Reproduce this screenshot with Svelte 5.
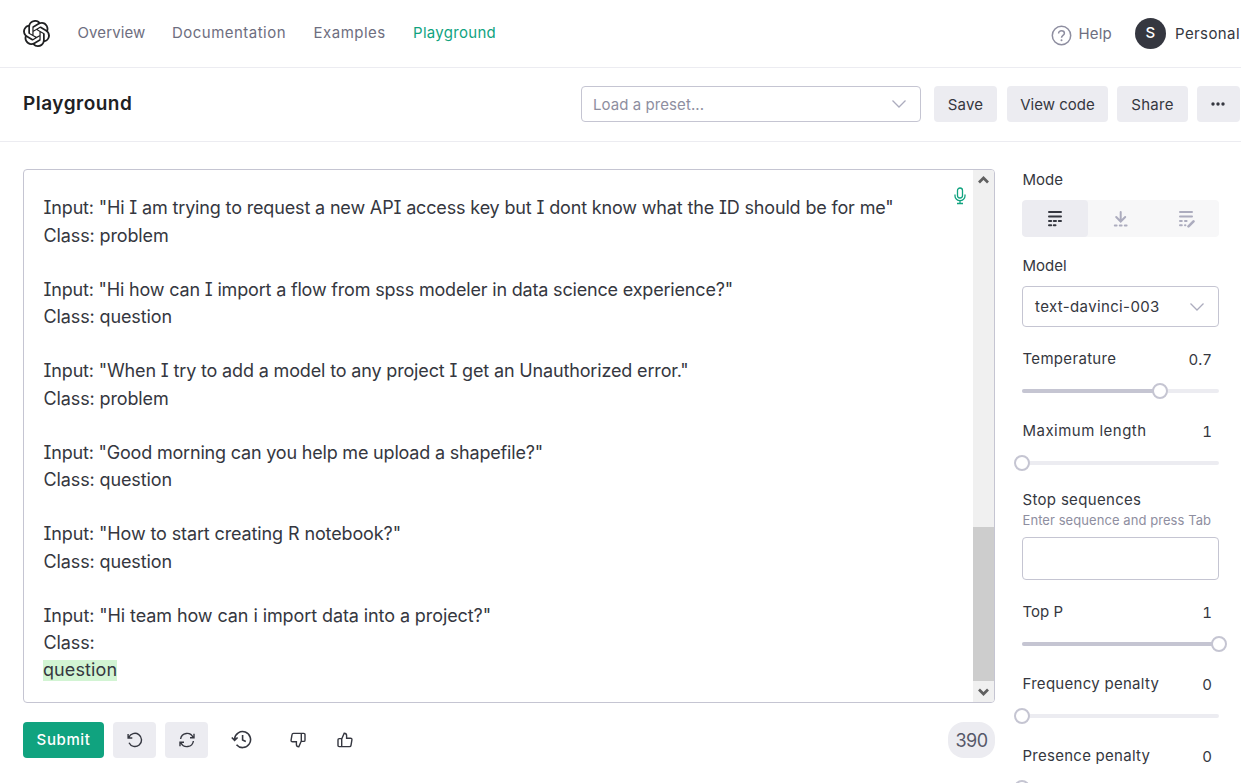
<script>
  const nav = [
    { label: 'Overview', width: 67, tracking: 0.1 },
    { label: 'Documentation', width: 114, tracking: 0.48 },
    { label: 'Examples', width: 72, tracking: 0.5 },
    { label: 'Playground', width: 83, tracking: 0.3, active: true }
  ];
  const examples = [
    { input: 'Input: "Hi I am trying to request a new API access key but I dont know what the ID should be for me"', label: 'Class: problem', tracking: -0.155 },
    { input: 'Input: "Hi how can I import a flow from spss modeler in data science experience?"', label: 'Class: question', tracking: -0.18 },
    { input: 'Input: "When I try to add a model to any project I get an Unauthorized error."', label: 'Class: problem', tracking: -0.155 },
    { input: 'Input: "Good morning can you help me upload a shapefile?"', label: 'Class: question', tracking: -0.19 },
    { input: 'Input: "How to start creating R notebook?"', label: 'Class: question', tracking: -0.12 },
    { input: 'Input: "Hi team how can i import data into a project?"', label: 'Class:', tracking: -0.09 }
  ];
</script>

{#snippet chevron()}
  <svg class="chevron" width="16" height="10" viewBox="0 0 16 10"><path d="M1.500 1.500 8 8l6.500-6.500" /></svg>
{/snippet}

{#snippet slider(label, value, percent, tracking)}
  <div class="slider">
    <div class="row"><span style="letter-spacing: {tracking}px">{label}</span><span class="value">{value}</span></div>
    <div class="track">
      <div class="fill" style="width: {percent}%"></div>
      <div class="thumb" style="left: {percent}%"></div>
    </div>
  </div>
{/snippet}

<div class="page">
  <header>
    <svg class="logo" viewBox="0 0 24 24"><path d="M22.2819 9.8211a5.9847 5.9847 0 0 0-.5157-4.9108 6.0462 6.0462 0 0 0-6.5098-2.9A6.0651 6.0651 0 0 0 4.9807 4.1818a5.9847 5.9847 0 0 0-3.9977 2.9 6.0462 6.0462 0 0 0 .7427 7.0966 5.98 5.98 0 0 0 .511 4.9107 6.051 6.051 0 0 0 6.5146 2.9001A5.9847 5.9847 0 0 0 13.2599 24a6.0557 6.0557 0 0 0 5.7718-4.2058 5.9894 5.9894 0 0 0 3.9977-2.9001 6.0557 6.0557 0 0 0-.7475-7.0729zm-9.022 12.6081a4.4755 4.4755 0 0 1-2.8764-1.0408l.1419-.0804 4.7783-2.7582a.7948.7948 0 0 0 .3927-.6813v-6.7369l2.02 1.1686a.071.071 0 0 1 .038.052v5.5826a4.504 4.504 0 0 1-4.4945 4.4944zm-9.6607-4.1254a4.4708 4.4708 0 0 1-.5346-3.0137l.142.0852 4.783 2.7582a.7712.7712 0 0 0 .7806 0l5.8428-3.3685v2.3324a.0804.0804 0 0 1-.0332.0615L9.74 19.9502a4.4992 4.4992 0 0 1-6.1408-1.6464zM2.3408 7.8956a4.485 4.485 0 0 1 2.3655-1.9728V11.6a.7664.7664 0 0 0 .3879.6765l5.8144 3.3543-2.0201 1.1685a.0757.0757 0 0 1-.071 0l-4.8303-2.7865A4.504 4.504 0 0 1 2.3408 7.872zm16.5963 3.8558L13.1038 8.364 15.1192 7.2a.0757.0757 0 0 1 .071 0l4.8303 2.7913a4.4944 4.4944 0 0 1-.6765 8.1042v-5.6772a.79.79 0 0 0-.407-.667zm2.0107-3.0231l-.142-.0852-4.7735-2.7818a.7759.7759 0 0 0-.7854 0L9.409 9.2297V6.8974a.0662.0662 0 0 1 .0284-.0615l4.8303-2.7866a4.4992 4.4992 0 0 1 6.6802 4.66zM8.3065 12.863l-2.02-1.1638a.0804.0804 0 0 1-.038-.0567V6.0742a4.4992 4.4992 0 0 1 7.3757-3.4537l-.142.0805L8.704 5.459a.7948.7948 0 0 0-.3927.6813zm1.0976-2.3654l2.602-1.4998 2.6069 1.4998v2.9994l-2.5974 1.4997-2.6067-1.4997Z" /></svg>
    <nav>
      {#each nav as item}
        <span class:active={item.active} style="width: {item.width}px; letter-spacing: {item.tracking}px">{item.label}</span>
      {/each}
    </nav>
    <div class="help">
      <svg width="21" height="21" viewBox="0 0 21 21"><circle cx="10.500" cy="10.500" r="9.200" /><path d="M7.600 8.400c0-1.600 1.200-2.700 2.900-2.700s2.900 1 2.900 2.500c0 2.200-2.900 2.200-2.900 4.500" /><circle class="dot" cx="10.500" cy="15.200" r="1" /></svg>
      <span>Help</span>
    </div>
    <div class="account"><span class="avatar">S</span><span>Personal</span></div>
  </header>

  <section class="titlebar">
    <h1>Playground</h1>
    <div class="preset"><span>Load a preset...</span>{@render chevron()}</div>
    <button class="save">Save</button>
    <button class="code">View code</button>
    <button class="share">Share</button>
    <button class="more" aria-label="More"><svg width="14" height="4" viewBox="0 0 14 4"><circle cx="2" cy="2" r="1.700" /><circle cx="7" cy="2" r="1.700" /><circle cx="12" cy="2" r="1.700" /></svg></button>
  </section>

  <main>
    <div class="left">
      <div class="editor">
        <div class="text">
          {#each examples as example, i}
            <div class="input" style="letter-spacing: {example.tracking}px">{example.input}</div>
            <div>{example.label}</div>
            {#if i < examples.length - 1}<div class="blank"></div>{/if}
          {/each}
          <div><mark>question</mark></div>
        </div>
        <svg class="mic" width="12" height="18" viewBox="0 0 12 18"><rect x="3.500" y="1" width="5" height="10" rx="2.500" /><path d="M1 7.500v1.500a5 4.700 0 0 0 10 0V7.500M6 13.700v2.800M3 16.500h6" /></svg>
        <div class="scrollbar">
          <svg width="21" height="21" viewBox="0 0 21 21"><path d="m6 12.500 4.500-4.500 4.500 4.500" /></svg>
          <div class="grip"></div>
          <svg width="21" height="21" viewBox="0 0 21 21"><path d="m6 8.500 4.500 4.500 4.500-4.500" /></svg>
        </div>
      </div>
      <div class="actions">
        <button class="submit">Submit</button>
        <button class="square" aria-label="Undo"><svg width="18" height="18" viewBox="0 0 18 18"><path d="M2.800 6.500A6.600 6.600 0 1 1 3 11.800M2.100 3v4h4.200" /></svg></button>
        <button class="square" aria-label="Regenerate"><svg width="18" height="18" viewBox="0 0 18 18"><path d="M2.600 8A6.500 6.500 0 0 1 15 6.300M16 2.800v4h-4M15.400 10A6.500 6.500 0 0 1 3 11.700M2 15.200v-4h4" /></svg></button>
        <svg class="history" width="21" height="19" viewBox="0 0 21 19"><path d="M3.600 10V8.800A8 8 0 1 1 5.500 14.800M.8 7.500l2.800 2.800 3-2.800M11.600 5v5l3.200 1.500" /></svg>
        <svg class="down" width="16" height="16" viewBox="0 0 16 16"><g transform="rotate(180 8 8)"><path d="M1 7.800c0-.8.5-1.200 1.200-1.200h2.500v8H2.200c-.7 0-1.200-.4-1.200-1.100zM4.700 7l2.500-5.700c1.600 0 2.400.9 2.400 2.200v2.700h3.900c1 0 1.600.7 1.400 1.700l-.9 5.400c-.1.800-.7 1.300-1.500 1.300H4.700" /></g></svg>
        <svg class="up" width="16" height="16" viewBox="0 0 16 16"><path d="M1 7.800c0-.8.5-1.200 1.200-1.200h2.500v8H2.200c-.7 0-1.200-.4-1.200-1.100zM4.700 7l2.500-5.700c1.600 0 2.400.9 2.400 2.200v2.700h3.900c1 0 1.600.7 1.400 1.700l-.9 5.400c-.1.800-.7 1.300-1.500 1.300H4.700" /></svg>
        <span class="count">390</span>
      </div>
    </div>

    <aside>
      <div class="label">Mode</div>
      <div class="modes">
        <span class="on"><svg width="16" height="18" viewBox="0 0 16 18"><path d="M2 2h12M2 6.500h12" /><path class="dash" d="M2 11h2.200M6.800 11h2.200M11.800 11h2.200M2 15.300h2.200M6.800 15.300h1.700" /></svg></span>
        <span><svg width="16" height="18" viewBox="0 0 16 18"><path d="M7.700 2v9M3.200 7l4.500 4.500L12.200 7" /><path class="dash" d="M1.800 15.500h1.800M6.800 15.500h1.800M11.800 15.500h1.800" /></svg></span>
        <span><svg width="18" height="18" viewBox="0 0 18 18"><path d="M3 2h12M3 6.500h12" /><path class="dash" d="M3 11h1.800M8 11h1.600M3 15.300h1.800M8 15.300h.4" /><path class="pen" d="m11.500 16.300 5-5" /></svg></span>
      </div>
      <div class="label model">Model</div>
      <div class="select"><span>text-davinci-003</span>{@render chevron()}</div>
      {@render slider('Temperature', '0.7', 70, 0.32)}
      {@render slider('Maximum length', '1', 0, 0.48)}
      <div class="label stop">Stop sequences</div>
      <div class="hint">Enter sequence and press Tab</div>
      <div class="field"></div>
      {@render slider('Top P', '1', 100, 0)}
      {@render slider('Frequency penalty', '0', 0, 0.28)}
      {@render slider('Presence penalty', '0', 0, 0.26)}
    </aside>
  </main>
</div>

<style>
  :global(body) { background: #fff; }
  .page {
    width: 1241px; height: 783px; overflow: hidden;
    font-family: Inter, "Liberation Sans", sans-serif;
    font-size: 15px; color: #353740;
    display: flex; flex-direction: column;
  }
  .page * { box-sizing: border-box; }
  svg { fill: none; stroke: currentColor; flex: none; display: block; }
  span, h1, button, .label, .hint, .text div { white-space: nowrap; }
  header { height: 68px; flex: none; border-bottom: 1px solid #ececf1; display: flex; align-items: center; padding-left: 23px; }
  .logo { width: 27px; height: 27px; fill: #202123; stroke: none; }
  nav { display: flex; gap: 27.500px; margin: -2px auto 0 27.500px; color: #6e6e80; }
  nav .active { color: #10a37f; }
  .help { display: flex; align-items: center; gap: 6px; color: #6e6e80; margin-right: 23px; letter-spacing: 0.2px; }
  .help svg { stroke: #8e8ea0; stroke-width: 1.500; margin-top: 3px; }
  .help .dot { fill: #8e8ea0; stroke: none; }
  .account { display: flex; align-items: center; gap: 9px; width: 106px; letter-spacing: 0.4px; }
  .avatar { width: 31px; height: 31px; border-radius: 50%; background: #353740; color: #fff; display: grid; place-items: center; font-weight: 500; padding-bottom: 2px; }
  .titlebar { height: 74px; flex: none; border-bottom: 1px solid #ececf1; display: flex; align-items: center; padding: 0 0 1px 23px; }
  h1 { margin: -1px auto 0 0; font-size: 19px; font-weight: 600; color: #202123; letter-spacing: 0.5px; }
  .preset, .select { border: 1px solid #c5c5d2; border-radius: 4px; display: flex; align-items: center; justify-content: space-between; }
  .preset { width: 340px; height: 36px; margin-right: 13px; padding: 0 13px 0 11px; color: #8e8ea0; letter-spacing: 0.07px; }
  .chevron { stroke: #acacbe; stroke-width: 1.300; }
  button { font: inherit; color: inherit; border: 0; padding: 0; border-radius: 4px; background: #ececf1; height: 36px; display: grid; place-items: center; flex: none; }
  .save { width: 63px; margin-right: 10px; letter-spacing: 0.2px; }
  .code { width: 101px; margin-right: 9px; }
  .share { width: 71px; margin-right: 9px; letter-spacing: 0.3px; }
  .more { width: 43px; margin-right: 1px; padding-right: 1px; }
  .more svg { fill: #353740; stroke: none; }
  main { display: flex; padding: 27px 22px 0 23px; flex: 1; min-height: 0; }
  .left { width: 972px; margin-right: 27px; flex: none; }
  .editor { position: relative; height: 534px; border: 1px solid #c5c5d2; border-radius: 4px; display: flex; overflow: hidden; }
  .text { flex: 1; padding: 24px 0 0 19.500px; font-size: 18px; line-height: 27.200px; font-feature-settings: "cv08"; letter-spacing: -0.12px; }
  .input { height: 27.600px; }
  .input:nth-last-child(3) { height: 27.200px; }
  .text .blank { height: 26.800px; }
  mark { background: #d2f4d3; color: inherit; line-height: 19px; padding-bottom: 2px; margin-left: -0.500px; display: inline-block; letter-spacing: 0.1px; }
  .mic { position: absolute; left: 930px; top: 17px; stroke: #10a37f; stroke-width: 1.300; }
  .scrollbar { width: 21px; background: #f0f0f0; display: flex; flex-direction: column; justify-content: flex-end; }
  .scrollbar svg { stroke: #606060; stroke-width: 2.700; }
  .scrollbar svg:first-child { margin-bottom: auto; }
  .grip { height: 154px; background: #cdcdcd; }
  .actions { display: flex; align-items: center; height: 36px; margin-top: 19px; }
  .submit { width: 81px; background: #10a37f; color: #fff; font-weight: 500; margin-right: 9px; padding-bottom: 2px; letter-spacing: 0.6px; }
  .square { width: 43px; margin-right: 9px; }
  .square svg { stroke-width: 1.400; }
  .history { margin: -1px 0 0 13.500px; stroke-width: 1.600; }
  .down { margin-left: 38.500px; stroke-width: 1.400; }
  .up { margin-left: 31px; stroke-width: 1.400; }
  .count { margin-left: auto; width: 47px; height: 36px; border-radius: 16px; background: #ececf1; color: #565869; font-size: 18px; display: grid; place-items: center; letter-spacing: -0.500px; }
  aside { width: 197px; flex: none; }
  .label { height: 20px; line-height: 20px; margin-top: 1px; padding-left: 0.500px; }
  .modes { display: flex; height: 37px; margin-top: 10px; background: #f7f7f8; border-radius: 4px; color: #acacbe; overflow: hidden; }
  .modes span { flex: 1; display: grid; place-items: center; }
  .modes .on { background: #ececf1; color: #353740; border-radius: 4px; }
  .modes svg { stroke-width: 2; stroke-linecap: round; }
  .modes .pen { stroke-width: 2.600; }
  .model { margin-top: 19px; }
  .select { height: 41px; margin-top: 10px; padding: 0 13px 0 12px; letter-spacing: 0.37px; }
  .slider { height: 72px; padding-top: 22px; }
  .row { display: flex; justify-content: space-between; height: 20px; line-height: 20px; padding: 0 7px 0 0.500px; }
  .value { padding-top: 1px; font-variant-numeric: tabular-nums; }
  .track { position: relative; height: 4px; margin-top: 20px; border-radius: 2px; background: #ececf1; }
  .fill { height: 4px; border-radius: 2px; background: #c5c5d2; }
  .thumb { position: absolute; top: -6px; width: 16px; height: 16px; margin-left: -8px; border: 2px solid #c5c5d2; border-radius: 50%; background: #fff; }
  .stop { margin-top: 19px; letter-spacing: 0.32px; }
  .hint { font-size: 13px; line-height: 18px; margin-top: 1px; padding-left: 0.500px; color: #8e8ea0; letter-spacing: 0.07px; }
  .field { height: 43px; margin-top: 8px; border: 1px solid #c5c5d2; border-radius: 4px; }
</style>
